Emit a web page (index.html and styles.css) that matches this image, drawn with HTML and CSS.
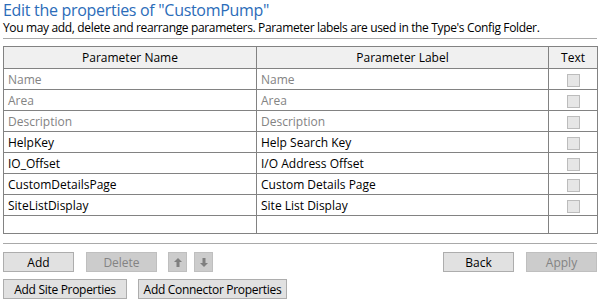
FILE: index.html
```html
<!doctype html>
<html>
    <head>
        <meta charset="UTF-8"/>
        <title>Edit properties</title>
        <link rel="stylesheet" href="styles.css">
    </head>
    <body>
    <div id="page">
        <h1 class="title">Edit the properties of "CustomPump"</h1>
        <p class="hint">You may add, delete and rearrange parameters. Parameter labels are used in the Type's Config Folder.</p>
        <hr class="sep">
        <table class="grid">
            <colgroup>
                <col class="c-name">
                <col class="c-label">
                <col class="c-text">
            </colgroup>
            <thead>
                <tr><th>Parameter Name</th><th>Parameter Label</th><th>Text</th></tr>
            </thead>
            <tbody>
                <tr class="fixed"><td>Name</td><td>Name</td><td class="chk"><span class="box"></span></td></tr>
                <tr class="fixed"><td>Area</td><td>Area</td><td class="chk"><span class="box"></span></td></tr>
                <tr class="fixed"><td>Description</td><td>Description</td><td class="chk"><span class="box"></span></td></tr>
                <tr><td>HelpKey</td><td>Help Search Key</td><td class="chk"><span class="box"></span></td></tr>
                <tr><td>IO_Offset</td><td>I/O Address Offset</td><td class="chk"><span class="box"></span></td></tr>
                <tr><td>CustomDetailsPage</td><td>Custom Details Page</td><td class="chk"><span class="box"></span></td></tr>
                <tr><td>SiteListDisplay</td><td>Site List Display</td><td class="chk"><span class="box"></span></td></tr>
                <tr class="blank"><td></td><td></td><td></td></tr>
            </tbody>
        </table>
        <hr class="sep sep2">
        <div class="bar">
            <button class="btn w70">Add</button>
            <button class="btn w70 off">Delete</button>
            <button class="btn sq off first"><svg width="8" height="9" viewBox="0 0 8 9"><path d="M4 0 L8 4 L5.5 4 L5.5 9 L2.5 9 L2.5 4 L0 4 Z" fill="#7f7f7f"/></svg></button>
            <button class="btn sq off"><svg width="8" height="9" viewBox="0 0 8 9"><path d="M4 9 L8 5 L5.5 5 L5.5 0 L2.5 0 L2.5 5 L0 5 Z" fill="#7f7f7f"/></svg></button>
            <span class="grow"></span>
            <button class="btn w70">Back</button>
            <button class="btn w70 off">Apply</button>
        </div>
        <div class="bar bar2">
            <button class="btn wide site">Add Site Properties</button>
            <button class="btn wide conn">Add Connector Properties</button>
        </div>
    </div>
    </body>
</html>
```
FILE: styles.css
```css
* {
    margin: 0px;
    padding: 0px;
    box-sizing: border-box;
}
body {
    background: #fff;
    font-family: "Segoe UI", "Open Sans", sans-serif;
    font-size: 12px;
    color: #000;
}
#page {
    width: 594px;
    margin-left: 3px;
    padding-top: 1px;
}
.title {
    font-weight: normal;
    font-size: 16px;
    line-height: 19px;
    color: #2b6cb9;
    letter-spacing: -0.3px;
}
.hint {
    font-size: 12px;
    line-height: 15px;
    letter-spacing: -0.35px;
}
.sep {
    border: none;
    border-top: 1px solid #a9a9a9;
    margin-top: 3px;
}
.sep2 {
    margin-top: 9px;
}
.grid {
    width: 594px;
    margin-top: 7px;
    border-collapse: collapse;
    table-layout: fixed;
    border: 1px solid #828282;
}
.c-name {
    width: 253px;
}
.c-label {
    width: 292px;
}
.c-text {
    width: 49px;
}
.grid th {
    background: #f0f0f0;
    font-weight: normal;
    height: 22px;
    border: 1px solid #828282;
    text-align: center;
    padding: 0;
}
.grid td {
    height: 21px;
    border: 1px solid #828282;
    padding: 0 0 0 4px;
    white-space: nowrap;
    overflow: hidden;
}
.grid .fixed td {
    color: #838383;
}
.grid .blank td {
    height: 18px;
}
.grid td.chk {
    padding: 0;
    text-align: center;
}
.box {
    display: inline-block;
    width: 13px;
    height: 13px;
    background: #e6e6e6;
    border: 1px solid #bcbcbc;
    vertical-align: middle;
}
.bar {
    display: flex;
    align-items: center;
    margin-top: 8px;
    height: 20px;
}
.bar2 {
    margin-top: 7px;
}
.btn {
    font-family: inherit;
    font-size: 12px;
    height: 20px;
    padding: 0 10px;
    background: #e1e1e1;
    border: 1px solid #adadad;
    color: #000;
    margin-right: 12px;
}
.btn.w70 {
    width: 71px;
    padding: 0;
}
.btn.wide {
    padding: 0;
    letter-spacing: -0.3px;
    white-space: nowrap;
    margin-right: 11px;
}
.btn.site {
    width: 124px;
}
.btn.conn {
    width: 149px;
}
.btn.off {
    background: #cccccc;
    border-color: #bfbfbf;
    color: #838383;
}
.btn.sq {
    width: 19px;
    padding: 0;
    margin-right: 7px;
    display: flex;
    align-items: center;
    justify-content: center;
}
.btn.first {
    margin-left: -1px;
}
.grow {
    flex: 1;
}
.bar .btn:last-child {
    margin-right: 0;
}
```
